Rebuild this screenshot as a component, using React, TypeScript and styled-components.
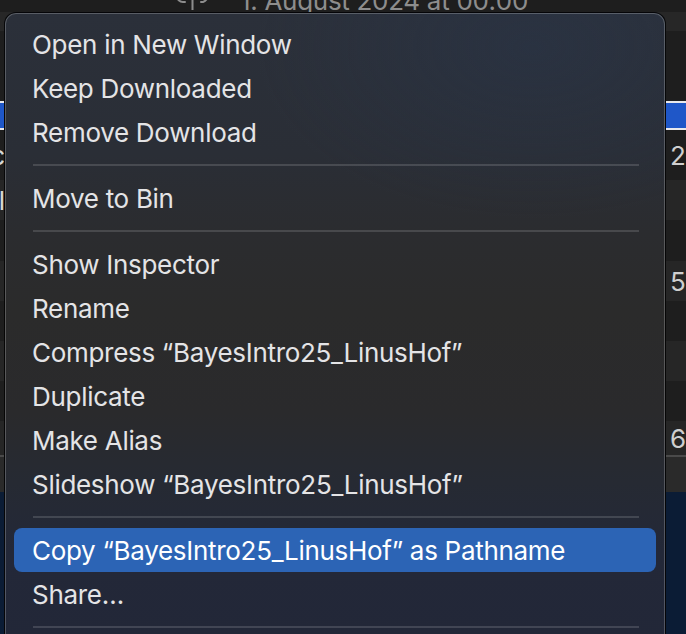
import React from "react";
import styled, { createGlobalStyle } from "styled-components";

const GlobalStyle = createGlobalStyle`
  html, body {
    margin: 0;
    padding: 0;
    background: #0b1c35;
  }
  body {
    font-family: "Inter", "Noto Sans", sans-serif;
    -webkit-font-smoothing: antialiased;
  }
`;

const Stage = styled.div`
  position: relative;
  width: 686px;
  height: 634px;
  overflow: hidden;
  background: #0b1c35;
`;

/* ---------- background Finder list ---------- */

const List = styled.div`
  display: flex;
  flex-direction: column;
`;

const Row = styled.div<{ $h: number; $bg: string }>`
  height: ${(p) => p.$h}px;
  background: ${(p) => p.$bg};
  display: flex;
  align-items: center;
  justify-content: space-between;
  overflow: hidden;
  color: #d8d8d8;
  font-size: 26px;
`;

const SelectedRow = styled.div`
  height: 25px;
  background: #1f57c8;
  border-top: 2px solid #e9e9ec;
  border-bottom: 2px solid #e9e9ec;
`;

const Divider = styled.div`
  height: 2px;
  background: #4a4a4a;
`;

const EdgeLeft = styled.span`
  width: 5px;
  overflow: hidden;
  display: flex;
  justify-content: flex-end;
  white-space: nowrap;
`;

const EdgeRight = styled.span`
  width: 16px;
  overflow: hidden;
  white-space: nowrap;
  color: #cfcfcf;
`;

const TopRow = styled.div`
  height: 12px;
  background: #1e1e1e;
  overflow: hidden;
  display: flex;
  align-items: flex-start;
  padding-left: 176px;
  gap: 30px;
`;

const DateText = styled.span`
  font-size: 26px;
  line-height: 26px;
  margin-top: -12px;
  color: #8d8d8d;
  white-space: nowrap;
  letter-spacing: -0.3px;
`;

const CloudIcon = styled.svg`
  margin-top: -20px;
  flex: none;
`;

/* ---------- context menu ---------- */

const Menu = styled.div`
  position: absolute;
  left: 4px;
  top: 12px;
  width: 662px;
  height: 700px;
  border: 1px solid rgba(0, 0, 0, 0.85);
  border-radius: 12px;
  box-shadow: inset 0 0 0 1px rgba(255, 255, 255, 0.22);
  background:
    radial-gradient(ellipse 60% 35% at 80% 5%, rgba(40, 55, 80, 0.35), transparent 70%),
    linear-gradient(
      180deg,
      #2b303a 0px,
      #2a2e36 140px,
      #2b2c2f 220px,
      #2b2b2b 300px,
      #2a2a2c 400px,
      #262a33 470px,
      #232838 540px,
      #222738 634px
    );
  padding: 9px 9px 0 9px;
  box-sizing: border-box;
  display: flex;
  flex-direction: column;
`;

const Item = styled.div<{ $active?: boolean }>`
  height: 44px;
  flex: none;
  display: flex;
  align-items: center;
  padding-left: 18px;
  border-radius: 8px;
  font-size: 26px;
  letter-spacing: -0.3px;
  white-space: nowrap;
  color: ${(p) => (p.$active ? "#ffffff" : "#e4e4e6")};
  background: ${(p) => (p.$active ? "#2c64b5" : "transparent")};
`;

const Separator = styled.div`
  height: 22px;
  flex: none;
  display: flex;
  align-items: center;
  padding: 0 17px 0 19px;

  &::after {
    content: "";
    flex: 1;
    height: 2px;
    background: rgba(255, 255, 255, 0.14);
  }
`;

type Entry = { label?: string; sep?: boolean; active?: boolean };

const entries: Entry[] = [
  { label: "Open in New Window" },
  { label: "Keep Downloaded" },
  { label: "Remove Download" },
  { sep: true },
  { label: "Move to Bin" },
  { sep: true },
  { label: "Show Inspector" },
  { label: "Rename" },
  { label: "Compress \u201CBayesIntro25_LinusHof\u201D" },
  { label: "Duplicate" },
  { label: "Make Alias" },
  { label: "Slideshow \u201CBayesIntro25_LinusHof\u201D" },
  { sep: true },
  { label: "Copy \u201CBayesIntro25_LinusHof\u201D as Pathname", active: true },
  { label: "Share\u2026" },
  { sep: true },
];

type BgRow = { h: number; bg: string; left?: string; right?: string };

const bgRowsTop: BgRow[] = [
  { h: 19, bg: "#272727" },
  { h: 70, bg: "#1e1e1e" },
];

const bgRowsBottom: BgRow[] = [
  { h: 50, bg: "#1e1e1e", left: "c", right: "2" },
  { h: 40, bg: "#262626", left: "l" },
  { h: 41, bg: "#1e1e1e" },
  { h: 40, bg: "#262626", right: "5" },
  { h: 40, bg: "#1e1e1e" },
  { h: 40, bg: "#262626" },
  { h: 40, bg: "#1e1e1e" },
  { h: 34, bg: "#262626", right: "6" },
];

const renderRow = (r: BgRow, i: number) => (
  <Row key={i} $h={r.h} $bg={r.bg}>
    <EdgeLeft>{r.left ?? ""}</EdgeLeft>
    <EdgeRight>{r.right ?? ""}</EdgeRight>
  </Row>
);

export default function App() {
  return (
    <Stage>
      <GlobalStyle />
      <List>
        <TopRow>
          <CloudIcon width="34" height="30" viewBox="0 0 34 30" fill="none">
            <path
              d="M9 22 H7 a6 6 0 0 1 0 -12 a8 8 0 0 1 15 -2 a6 6 0 0 1 5 14 H25"
              stroke="#8d8d8d"
              strokeWidth="2"
              strokeLinecap="round"
              strokeLinejoin="round"
            />
            <path d="M16.5 14 V30" stroke="#8d8d8d" strokeWidth="2" strokeLinecap="round" />
          </CloudIcon>
          <DateText>1. August 2024 at 00:00</DateText>
        </TopRow>
        {bgRowsTop.map(renderRow)}
        <SelectedRow />
        {bgRowsBottom.map(renderRow)}
        <Divider />
        <Row $h={35} $bg="#2a2a2a" />
      </List>

      <Menu>
        {entries.map((e, i) =>
          e.sep ? (
            <Separator key={i} />
          ) : (
            <Item key={i} $active={e.active}>
              {e.label}
            </Item>
          )
        )}
      </Menu>
    </Stage>
  );
}
